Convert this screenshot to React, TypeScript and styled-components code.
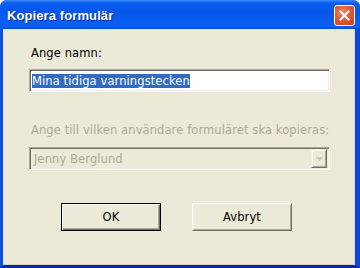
import React from "react";
import styled, { createGlobalStyle } from "styled-components";

const GlobalStyle = createGlobalStyle`
  html, body {
    margin: 0;
    padding: 0;
    background: #ffffff;
  }
`;

const Window = styled.div`
  width: 360px;
  height: 268px;
  display: flex;
  flex-direction: column;
  border-radius: 7px 7px 0 0;
  overflow: hidden;
  background: #0a4fe0;
`;

const TitleBar = styled.div`
  height: 29px;
  flex: none;
  display: flex;
  align-items: center;
  justify-content: space-between;
  padding: 0 5px 0 7px;
  box-sizing: border-box;
  background: linear-gradient(
    to bottom,
    #3a8cf8 0%,
    #0c5ef0 10%,
    #0456ea 40%,
    #0a5ff2 80%,
    #0b5ff0 92%,
    #0449d8 100%
  );
`;

const Title = styled.span`
  font-family: "Liberation Sans", Arial, sans-serif;
  font-weight: 700;
  font-size: 13px;
  color: #ffffff;
  text-shadow: 1px 1px 0 #0a2a9a;
  letter-spacing: 0.1px;
  padding-top: 1px;
`;

const CloseButton = styled.div`
  width: 21px;
  height: 21px;
  box-sizing: border-box;
  border: 1px solid #ffffff;
  border-radius: 3px;
  background: radial-gradient(
    circle at 40% 35%,
    #f08a6c 0%,
    #e35a36 45%,
    #c8401c 100%
  );
  display: flex;
  align-items: center;
  justify-content: center;
  margin-top: 1px;
`;

const Frame = styled.div`
  flex: 1;
  display: flex;
  border-left: 3px solid #0b52e4;
  border-right: 5px solid #0a48d6;
  border-bottom: 3px solid #0c2a9c;
`;

const Body = styled.div`
  flex: 1;
  background: #ece9d8;
  display: flex;
  flex-direction: column;
  padding: 17px 0 0 26px;
  box-shadow: inset -1px -1px 0 #d8d4c4;
  font-family: "DejaVu Sans", Tahoma, sans-serif;
  font-size: 11.5px;
  letter-spacing: 0.1px;
`;

const Label = styled.div<{ $disabled?: boolean }>`
  line-height: 14px;
  color: ${(p) => (p.$disabled ? "#aca899" : "#000000")};
  padding-left: 2px;
  margin-bottom: ${(p) => (p.$disabled ? "10px" : "9px")};
`;

const Sunken = styled.div<{ $disabled?: boolean }>`
  width: 301px;
  height: 23px;
  box-sizing: border-box;
  display: flex;
  align-items: center;
  border-top: 1px solid #aca899;
  border-left: 1px solid #aca899;
  border-right: 1px solid #ffffff;
  border-bottom: 1px solid #ffffff;
  box-shadow: inset 1px 1px 0 #716f64, inset -1px -1px 0 #f1efe2;
  background: ${(p) => (p.$disabled ? "#ece9d8" : "#ffffff")};
`;

const InputText = styled.span`
  margin-left: 2px;
  line-height: 14px;
  background: #316ac5;
  color: #ffffff;
`;

const ComboText = styled.span`
  flex: 1;
  margin-left: 4px;
  color: #aca899;
`;

const ComboButton = styled.div`
  width: 16px;
  height: 19px;
  margin-right: 2px;
  box-sizing: border-box;
  background: #ece9d8;
  border-top: 1px solid #f1efe2;
  border-left: 1px solid #f1efe2;
  border-right: 1px solid #716f64;
  border-bottom: 1px solid #716f64;
  box-shadow: inset 1px 1px 0 #ffffff, inset -1px -1px 0 #aca899;
  display: flex;
  align-items: center;
  justify-content: center;
`;

const Gap = styled.div<{ $h: number }>`
  height: ${(p) => p.$h}px;
  flex: none;
`;

const ButtonRow = styled.div`
  display: flex;
  gap: 31px;
  padding-left: 32px;
  margin-top: 33px;
`;

const Button = styled.div<{ $default?: boolean }>`
  width: 100px;
  height: 28px;
  box-sizing: border-box;
  display: flex;
  align-items: center;
  justify-content: center;
  color: #000000;
  background: #ece9d8;
  border: 1px solid;
  border-color: ${(p) =>
    p.$default ? "#000000" : "#ffffff #716f64 #716f64 #ffffff"};
  box-shadow: ${(p) =>
    p.$default
      ? "inset 1px 1px 0 #ffffff, inset -1px -1px 0 #716f64, inset -2px -2px 0 #aca899"
      : "inset 1px 1px 0 #f1efe2, inset -1px -1px 0 #aca899"};
`;

export default function App() {
  return (
    <>
      <GlobalStyle />
      <Window>
        <TitleBar>
          <Title>Kopiera formulär</Title>
          <CloseButton>
            <svg width="11" height="11" viewBox="0 0 11 11">
              <path
                d="M1.5 1.5 L9.5 9.5 M9.5 1.5 L1.5 9.5"
                stroke="#ffffff"
                strokeWidth="2"
                strokeLinecap="square"
              />
            </svg>
          </CloseButton>
        </TitleBar>
        <Frame>
          <Body>
            <Label>Ange namn:</Label>
            <Sunken>
              <InputText>Mina tidiga varningstecken</InputText>
            </Sunken>
            <Gap $h={31} />
            <Label $disabled>
              Ange till vilken användare formuläret ska kopieras:
            </Label>
            <Sunken $disabled>
              <ComboText>Jenny Berglund</ComboText>
              <ComboButton>
                <svg width="7" height="4" viewBox="0 0 7 4">
                  <path d="M0 0 H7 L3.5 4 Z" fill="#c9c6b8" />
                </svg>
              </ComboButton>
            </Sunken>
            <ButtonRow>
              <Button $default>OK</Button>
              <Button>Avbryt</Button>
            </ButtonRow>
          </Body>
        </Frame>
      </Window>
    </>
  );
}
